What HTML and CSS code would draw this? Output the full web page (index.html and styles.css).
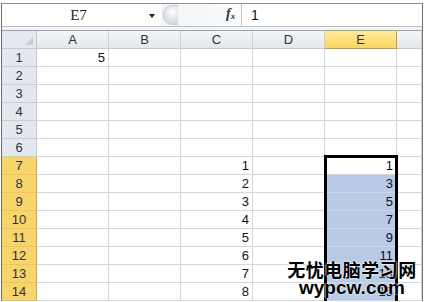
FILE: index.html
```html
<!DOCTYPE html>
<html lang="zh-CN">
<head>
  <meta charset="UTF-8">
  <title>E7</title>
  <link rel="stylesheet" href="styles.css">
</head>
<body>
  <div class="window">
    <div class="formula-bar">
      <div class="name-box">
        <span class="name">E7</span>
        <span class="drop"></span>
      </div>
      <div class="splitter"><span class="knob"></span></div>
      <div class="fx">f<sub>x</sub></div>
      <div class="formula">1</div>
    </div>
    <div class="bar-gap"></div>

    <div class="grid">
      <div class="corner"><span class="tri"></span></div>
      <div class="col-head">A</div>
      <div class="col-head">B</div>
      <div class="col-head">C</div>
      <div class="col-head">D</div>
      <div class="col-head active">E</div>
      <div class="col-head"></div>

      <div class="row-head">1</div><div class="cell">5</div><div class="cell"></div><div class="cell"></div><div class="cell"></div><div class="cell"></div><div class="cell"></div>
      <div class="row-head">2</div><div class="cell"></div><div class="cell"></div><div class="cell"></div><div class="cell"></div><div class="cell"></div><div class="cell"></div>
      <div class="row-head">3</div><div class="cell"></div><div class="cell"></div><div class="cell"></div><div class="cell"></div><div class="cell"></div><div class="cell"></div>
      <div class="row-head">4</div><div class="cell"></div><div class="cell"></div><div class="cell"></div><div class="cell"></div><div class="cell"></div><div class="cell"></div>
      <div class="row-head">5</div><div class="cell"></div><div class="cell"></div><div class="cell"></div><div class="cell"></div><div class="cell"></div><div class="cell"></div>
      <div class="row-head">6</div><div class="cell"></div><div class="cell"></div><div class="cell"></div><div class="cell"></div><div class="cell"></div><div class="cell"></div>
      <div class="row-head active">7</div><div class="cell"></div><div class="cell"></div><div class="cell">1</div><div class="cell"></div><div class="cell">1</div><div class="cell"></div>
      <div class="row-head active">8</div><div class="cell"></div><div class="cell"></div><div class="cell">2</div><div class="cell"></div><div class="cell sel">3</div><div class="cell"></div>
      <div class="row-head active">9</div><div class="cell"></div><div class="cell"></div><div class="cell">3</div><div class="cell"></div><div class="cell sel">5</div><div class="cell"></div>
      <div class="row-head active">10</div><div class="cell"></div><div class="cell"></div><div class="cell">4</div><div class="cell"></div><div class="cell sel">7</div><div class="cell"></div>
      <div class="row-head active">11</div><div class="cell"></div><div class="cell"></div><div class="cell">5</div><div class="cell"></div><div class="cell sel">9</div><div class="cell"></div>
      <div class="row-head active">12</div><div class="cell"></div><div class="cell"></div><div class="cell">6</div><div class="cell"></div><div class="cell sel">11</div><div class="cell"></div>
      <div class="row-head active">13</div><div class="cell"></div><div class="cell"></div><div class="cell">7</div><div class="cell"></div><div class="cell sel">13</div><div class="cell"></div>
      <div class="row-head active">14</div><div class="cell"></div><div class="cell"></div><div class="cell">8</div><div class="cell"></div><div class="cell sel">15</div><div class="cell"></div>

      <div class="selection"></div>
    </div>
  </div>

  <div class="watermark">
    <div class="wm-cn">无忧电脑学习网</div>
    <div class="wm-en">wypcw.com</div>
  </div>
</body>
</html>
```

FILE: styles.css
```css
body {
  margin: 0;
  background: #fff;
  font-family: "Liberation Sans", Arial, sans-serif;
  overflow: hidden;
}
.window {
  width: 420px;
  margin: 3px 0 0 1px;
  border-left: 1px solid #707070;
  border-right: 1px solid #707070;
  border-top: 1px solid #8c8c8c;
}

/* formula bar */
.formula-bar {
  display: flex;
  height: 22px;
  border-bottom: 1px solid #b9c0ca;
}
.name-box {
  width: 159px;
  display: flex;
  align-items: center;
}
.name {
  flex: 1;
  text-align: center;
  font-family: "Liberation Serif", serif;
  font-size: 15px;
  color: #222;
  padding-left: 6px;
}
.drop {
  width: 0;
  height: 0;
  border-left: 3px solid transparent;
  border-right: 3px solid transparent;
  border-top: 4px solid #222;
  margin-right: 6px;
  margin-top: 1px;
}
.splitter {
  width: 80px;
  display: flex;
  align-items: center;
  background: linear-gradient(to right, #f3f4f6, #fafbfc);
}
.knob {
  width: 14px;
  height: 18px;
  margin-left: 2px;
  border-radius: 9px 0 0 9px;
  border: 1px solid #c9ced6;
  border-right: none;
  background: radial-gradient(circle at 60% 35%, #ffffff 0, #e3e6ea 45%, #c9ced5 100%);
}
.fx {
  width: 0;
  flex: 0 0 0;
  position: relative;
  left: -15px;
  top: 2px;
  font-family: "Liberation Serif", serif;
  font-style: italic;
  font-weight: bold;
  font-size: 14px;
  color: #333;
  white-space: nowrap;
}
.fx sub {
  font-size: 9px;
  vertical-align: -1px;
}
.formula {
  flex: 1;
  border-left: 1px solid #c3c9d1;
  padding-left: 9px;
  font-size: 14px;
  line-height: 22px;
  color: #111;
}
.bar-gap {
  height: 3px;
  background: #f4f5f7;
  border-bottom: 1px solid #9aa3ae;
}

/* sheet grid */
.grid {
  position: relative;
  display: grid;
  grid-template-columns: 35px repeat(5, 72px) 25px;
  grid-auto-rows: 18px;
  font-size: 13px;
  color: #111;
}
.grid > div {
  box-sizing: border-box;
}
.corner {
  position: relative;
  background: #e5e8ee;
  border-right: 1px solid #c5cad2;
  border-bottom: 1px solid #c5cad2;
}
.tri {
  position: absolute;
  right: 3px;
  bottom: 3px;
  width: 0;
  height: 0;
  border-left: 8px solid transparent;
  border-bottom: 8px solid #c8ccd2;
}
.col-head {
  text-align: center;
  line-height: 17px;
  color: #333;
  background: linear-gradient(#f4f6f8, #e3e7ec);
  border-right: 1px solid #cdd2d9;
  border-bottom: 1px solid #c5cad2;
}
.col-head.active {
  background: linear-gradient(#ffeb9c, #f9d660);
  border-right: 1px solid #c29b3a;
  border-bottom: 1px solid #c29b3a;
}
.row-head {
  text-align: center;
  line-height: 18px;
  color: #333;
  background: #e4e8ee;
  border-right: 1px solid #c5cad2;
  border-bottom: 1px solid #c9ced6;
}
.row-head.active {
  background: #f8d46c;
  border-bottom: 1px solid #f0c45a;
  border-right: 1px solid #d1a54a;
}
.cell {
  text-align: right;
  padding-right: 3px;
  line-height: 18px;
  border-right: 1px solid #d6d6d6;
  border-bottom: 1px solid #d6d6d6;
}
.cell.sel {
  background: #b8cbe6;
  border-bottom-color: #c9d6ea;
}
.selection {
  position: absolute;
  left: 322px;
  top: 124px;
  width: 74px;
  height: 180px;
  border: 3px solid #000;
  box-sizing: border-box;
}

/* site watermark */
.watermark {
  position: absolute;
  left: 287px;
  top: 259px;
  width: 130px;
  text-align: center;
  color: #000;
  font-weight: bold;
  text-shadow: 0 0 2px #fff, 0 0 2px #fff;
}
.wm-cn {
  font-family: "Noto Sans CJK SC", sans-serif;
  font-size: 18px;
  line-height: 21px;
  letter-spacing: 0.5px;
}
.wm-en {
  font-family: "Liberation Sans", Arial, sans-serif;
  font-size: 19px;
  line-height: 16px;
}
```
